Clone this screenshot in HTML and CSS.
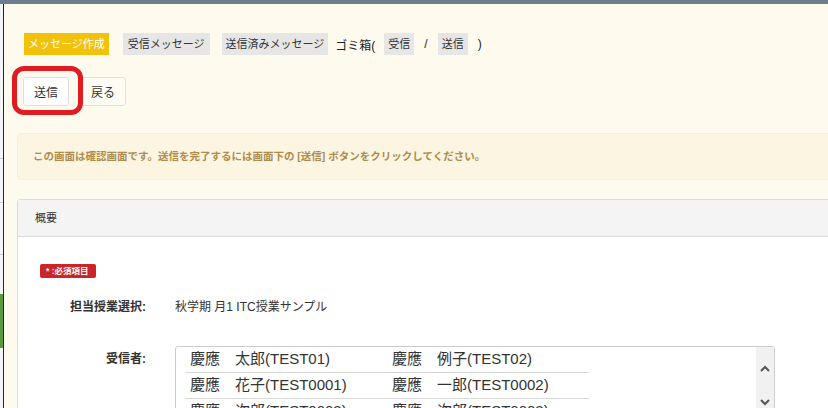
FILE: index.html
```html
<!DOCTYPE html>
<html lang="ja">
  <head>
    <meta charset="UTF-8" />
    <title>メッセージ作成 確認</title>
    <link rel="stylesheet" href="styles.css">
  </head>
  <body>
    <div class="topbar"></div>
    <div class="layout">
      <div class="sidebar">
        <div class="side-line l1"></div>
        <div class="side-line l2"></div>
        <div class="side-line l3"></div>
        <div class="side-green"></div>
      </div>
      <div class="main">
        <div class="tabs">
          <span class="tab active">メッセージ作成</span>
          <span class="tab">受信メッセージ</span>
          <span class="tab last">送信済みメッセージ</span>
          <span class="tab-text trash">ゴミ箱(</span>
          <span class="tab small">受信</span>
          <span class="tab-text slash">/</span>
          <span class="tab small">送信</span>
          <span class="tab-text">)</span>
        </div>

        <div class="actions">
          <button class="btn">送信</button>
          <button class="btn">戻る</button>
          <div class="highlight"></div>
        </div>

        <div class="alert">
          この画面は確認画面です。送信を完了するには画面下の [送信] ボタンをクリックしてください。
        </div>

        <div class="panel">
          <div class="panel-head">概要</div>
          <div class="panel-body">
            <div class="required">* :必須項目</div>
            <div class="form-row">
              <div class="label">担当授業選択:</div>
              <div class="value">秋学期 月1 ITC授業サンプル</div>
            </div>
            <div class="form-row">
              <div class="label">受信者:</div>
              <div class="listbox">
                <table class="members">
                  <tr><td>慶應　太郎(TEST01)</td><td>慶應　例子(TEST02)</td></tr>
                  <tr><td>慶應　花子(TEST0001)</td><td>慶應　一郎(TEST0002)</td></tr>
                  <tr><td>慶應　次郎(TEST0003)</td><td>慶應　次郎(TEST0003)</td></tr>
                </table>
                <div class="scrollbar">
                  <svg width="12" height="8" viewBox="0 0 12 8"><path d="M2 6 L6 2 L10 6" fill="none" stroke="#555" stroke-width="2"/></svg>
                  <svg width="12" height="8" viewBox="0 0 12 8"><path d="M2 2 L6 6 L10 2" fill="none" stroke="#555" stroke-width="2"/></svg>
                </div>
              </div>
            </div>
          </div>
        </div>
      </div>
    </div>
  </body>
</html>
```

FILE: styles.css
```css
body {
  margin: 0;
  padding: 0;
  font-family: "Liberation Sans", "Noto Sans CJK JP", sans-serif;
  color: #333;
  background-color: #fffaee;
  overflow: hidden;
  height: 408px;
}

.topbar {
  height: 4px;
  background-color: #6f7c8c;
}

.layout {
  display: flex;
  height: 404px;
}

.sidebar {
  position: relative;
  width: 3px;
  background-color: #f4f5f8;
  border-right: 1px solid #1d2442;
  flex-shrink: 0;
}

.side-line {
  position: absolute;
  left: 0;
  width: 3px;
  height: 1px;
  background-color: #c9ccd4;
}

.l1 { top: 154px; }
.l2 { top: 198px; }
.l3 { top: 250px; }

.side-green {
  position: absolute;
  left: 0;
  top: 290px;
  width: 3px;
  height: 54px;
  background-color: #5b9a3c;
}

.main {
  flex: 1;
  padding: 29px 0 0 13px;
  min-width: 0;
}

.tabs {
  display: flex;
  align-items: center;
  margin-left: 7px;
  font-size: 11px;
  height: 22px;
}

.tab {
  display: inline-block;
  background-color: #e6e6e6;
  color: #333;
  padding: 0 5px;
  line-height: 22px;
  margin-right: 12px;
}

.tab.active {
  background-color: #f2c10a;
  color: #fff;
  padding: 0 4px;
  margin-right: 14px;
}

.tab.last {
  padding: 0 4px;
  margin-right: 7px;
}

.tab.small {
  padding: 0 4px;
  margin-right: 10px;
}

.tab-text {
  color: #222;
  font-size: 12px;
}

.trash {
  margin-right: 9px;
}

.slash {
  margin-right: 10px;
}

.actions {
  position: relative;
  display: flex;
  gap: 11px;
  margin: 22px 0 0 6px;
}

.btn {
  font-family: inherit;
  font-size: 12px;
  color: #333;
  background-color: #fff;
  border: 1px solid #e2e0db;
  border-radius: 3px;
  width: 46px;
  height: 29px;
  padding: 0;
}

.btn + .btn {
  background-color: #fffcf5;
}

.highlight {
  position: absolute;
  left: -11px;
  top: -11px;
  width: 61px;
  height: 39px;
  border: 5px solid #e01b22;
  border-radius: 12px;
}

.alert {
  margin-top: 27px;
  height: 45px;
  line-height: 45px;
  padding-left: 15px;
  background-color: #fcf5e1;
  border: 1px solid #f7efd8;
  border-right: none;
  border-radius: 4px 0 0 4px;
  color: #ad8c4d;
  font-size: 10.5px;
  font-weight: bold;
  white-space: nowrap;
}

.panel {
  margin-top: 19px;
  background-color: #fff;
  border: 1px solid #dcdcdc;
  border-right: none;
  border-radius: 4px 0 0 0;
  height: 300px;
}

.panel-head {
  background-color: #f4f4f4;
  border-bottom: 1px solid #dcdcdc;
  height: 36px;
  line-height: 36px;
  padding-left: 17px;
  font-size: 11px;
  color: #333;
}

.panel-body {
  padding: 27px 0 0 22px;
}

.required {
  width: fit-content;
  background-color: #c9252b;
  color: #fff;
  font-size: 8.5px;
  font-weight: bold;
  line-height: 14px;
  padding: 0 7px 0 6px;
  border-radius: 2px;
}

.form-row {
  display: grid;
  grid-template-columns: 106px 600px;
  column-gap: 29px;
  margin-top: 19px;
}

.label {
  text-align: right;
  font-size: 12px;
  font-weight: bold;
  color: #333;
  line-height: 20px;
}

.value {
  font-size: 12px;
  line-height: 20px;
  color: #333;
}

.form-row + .form-row .label {
  margin-top: -2px;
}

.form-row + .form-row {
  margin-top: 34px;
}

.listbox {
  position: relative;
  border: 1px solid #ccc;
  border-radius: 3px;
  height: 80px;
  margin-top: -5px;
}

.members {
  border-collapse: collapse;
  margin-left: 9px;
  font-size: 15px;
  color: #333;
}

.members td {
  width: 197px;
  padding: 0 0 4px 5px;
  height: 21px;
  border-bottom: 1px solid #d8d8d8;
  white-space: nowrap;
}

.scrollbar {
  position: absolute;
  right: 0;
  top: 0;
  width: 18px;
  height: 80px;
  background-color: #f1f1f1;
  display: flex;
  flex-direction: column;
  align-items: center;
  gap: 25px;
  padding-top: 18px;
  box-sizing: border-box;
}
```
